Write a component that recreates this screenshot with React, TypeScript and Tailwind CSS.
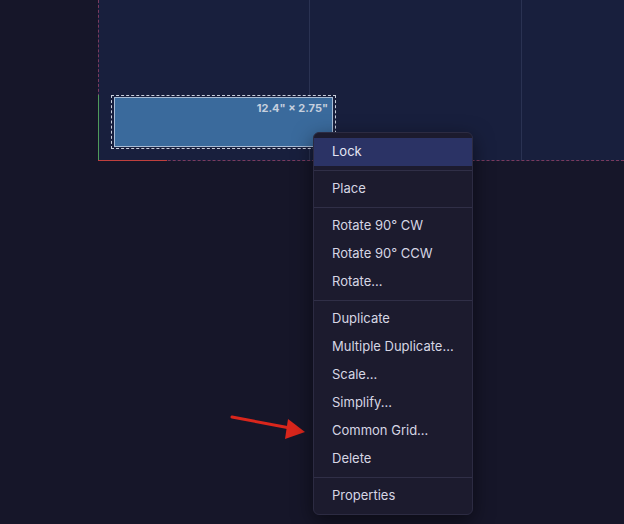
import React from 'react';

type MenuEntry = { label: string; active?: boolean } | 'sep';

const entries: MenuEntry[] = [
  { label: 'Lock', active: true },
  'sep',
  { label: 'Place' },
  'sep',
  { label: 'Rotate 90° CW' },
  { label: 'Rotate 90° CCW' },
  { label: 'Rotate...' },
  'sep',
  { label: 'Duplicate' },
  { label: 'Multiple Duplicate...' },
  { label: 'Scale...' },
  { label: 'Simplify...' },
  { label: 'Common Grid...' },
  { label: 'Delete' },
  'sep',
  { label: 'Properties' },
];

const ContextMenu: React.FC = () => (
  <div className="absolute left-[313px] top-[132px] flex w-[160px] flex-col rounded-md border border-[#2c2b42] bg-[#1c1b2e] pt-[5px] pb-1 shadow-[0_6px_20px_rgba(0,0,0,0.5)]">
    {entries.map((e, i) =>
      e === 'sep' ? (
        <div key={i} className="my-1 h-px bg-[#302f47]" />
      ) : (
        <div
          key={i}
          className={`flex h-7 items-center pl-[18px] text-[13px] ${
            e.active ? 'bg-[#2b3365] text-[#e4e6f5]' : 'text-[#d6d6e4]'
          }`}
        >
          {e.label}
        </div>
      )
    )}
  </div>
);

export default function App() {
  return (
    <div
      className="relative h-[524px] w-[624px] overflow-hidden bg-[#161629]"
      style={{ fontFamily: 'Inter, "Noto Sans", sans-serif' }}
    >
      {/* board with grid columns */}
      <div className="ml-[98px] flex h-[161px] border-b border-l border-dashed border-[#7a3a5e] bg-[#181f3d]">
        <div className="w-[211px] border-r border-[#2a3252]" />
        <div className="w-[212px] border-r border-[#2a3252]" />
        <div className="flex-1" />
      </div>

      {/* origin axes */}
      <div className="absolute left-[98px] top-[95px] h-[66px] w-px bg-[#4f9a5a]" />
      <div className="absolute left-[98px] top-[160px] h-px w-[69px] bg-[#c0403e]" />

      {/* selected shape */}
      <div className="absolute left-[111px] top-[95px] h-[54px] w-[225px] border border-dashed border-[#c8cedb] p-px pl-[2px]">
        <div className="flex h-full w-[219px] justify-end border border-[#a8bcd6] bg-[#3a6a9c] pr-[4px] pt-[5px]">
          <span className="text-[11px] font-bold leading-none text-[#c6d0de]">12.4" × 2.75"</span>
        </div>
      </div>

      {/* annotation arrow */}
      <svg className="absolute left-[228px] top-[410px]" width="84" height="30" viewBox="0 0 84 30">
        <line x1="4" y1="7" x2="62" y2="18" stroke="#d9261c" strokeWidth="3" strokeLinecap="round" />
        <polygon points="77,22 57,29 60,9" fill="#d9261c" />
      </svg>

      <ContextMenu />
    </div>
  );
}
